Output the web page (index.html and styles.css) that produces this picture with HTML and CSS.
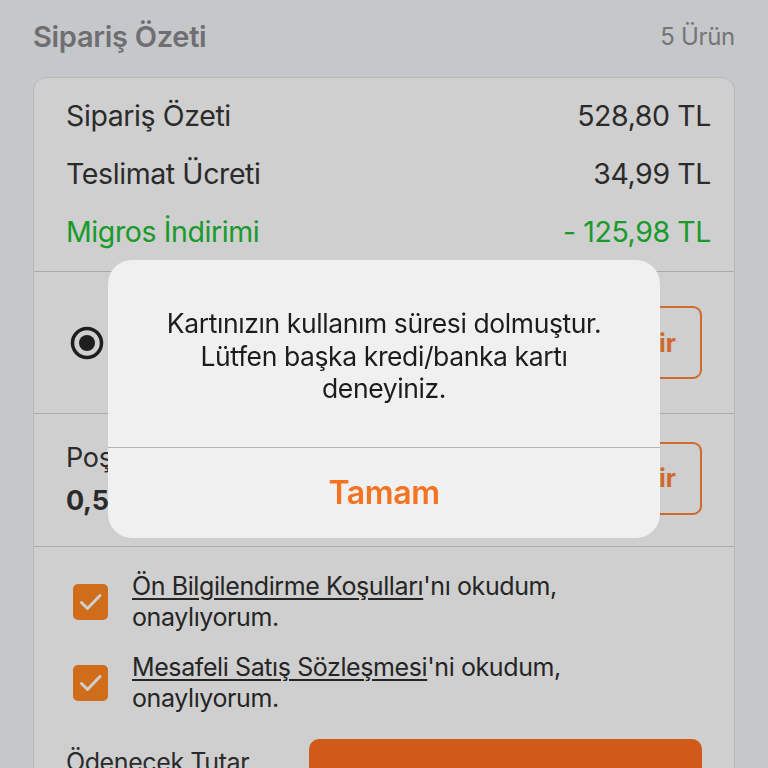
FILE: index.html
```html
<!DOCTYPE html>
<html lang="tr">
<head>
  <meta charset="UTF-8" />
  <meta name="viewport" content="width=device-width, initial-scale=1.0"/>
  <title>Sipariş Özeti</title>
  <link rel="stylesheet" href="styles.css">
</head>
<body>
  <div class="screen">
    <header class="page-head">
      <h1>Sipariş Özeti</h1>
      <span class="count">5 Ürün</span>
    </header>

    <section class="card">
      <div class="summary">
        <div class="line"><span>Sipariş Özeti</span><span>528,80 TL</span></div>
        <div class="line"><span>Teslimat Ücreti</span><span>34,99 TL</span></div>
        <div class="line discount"><span>Migros İndirimi</span><span>- 125,98 TL</span></div>
      </div>

      <div class="option">
        <svg class="radio" width="34" height="34" viewBox="0 0 34 34">
          <circle cx="17" cy="17" r="14.5" fill="none" stroke="#262626" stroke-width="3.5"/>
          <circle cx="17" cy="17" r="8" fill="#262626"/>
        </svg>
        <div class="option-text">
          <span class="title">Kart</span>
        </div>
        <button class="change">Değiştir</button>
      </div>

      <div class="option bag">
        <div class="option-text">
          <span class="title">Poşet Ücreti</span>
          <span class="value">0,50 TL</span>
        </div>
        <button class="change">Değiştir</button>
      </div>

      <div class="terms">
        <label class="check">
          <span class="box">
            <svg width="24" height="20" viewBox="0 0 24 20"><path d="M2.5 10.5 L8.5 16.5 L21 3.5" fill="none" stroke="#fff" stroke-width="3" stroke-linecap="round" stroke-linejoin="round"/></svg>
          </span>
          <span class="check-text"><u>Ön Bilgilendirme Koşulları</u>'nı okudum, onaylıyorum.</span>
        </label>
        <label class="check">
          <span class="box">
            <svg width="24" height="20" viewBox="0 0 24 20"><path d="M2.5 10.5 L8.5 16.5 L21 3.5" fill="none" stroke="#fff" stroke-width="3" stroke-linecap="round" stroke-linejoin="round"/></svg>
          </span>
          <span class="check-text"><u>Mesafeli Satış Sözleşmesi</u>'ni okudum, onaylıyorum.</span>
        </label>
      </div>

      <div class="total">
        <div class="total-text">
          <span>Ödenecek Tutar</span>
          <strong>437,81 TL</strong>
        </div>
        <button class="pay">Siparişi Tamamla</button>
      </div>
    </section>
  </div>

  <div class="dim"></div>

  <div class="alert">
    <p class="alert-msg">Kartınızın kullanım süresi dolmuştur. Lütfen başka kredi/banka kartı deneyiniz.</p>
    <button class="alert-btn">Tamam</button>
  </div>
</body>
</html>
```

FILE: styles.css
```css
body {
  margin: 0;
  font-family: Inter, "Noto Sans", sans-serif;
  background: #f4f6fb;
  color: #353535;
  overflow: hidden;
  height: 768px;
}
.screen {
  padding: 0 33px;
}
.page-head {
  display: flex;
  justify-content: space-between;
  align-items: center;
  height: 72px;
}
.page-head h1 {
  margin: 0;
  font-size: 29px;
  font-weight: 600;
  color: #89898d;
  letter-spacing: -0.3px;
}
.count {
  font-size: 24px;
  color: #919191;
  letter-spacing: -0.3px;
}
.card {
  margin-top: 5px;
  background: #fff;
  border: 1px solid #e2e2e2;
  border-radius: 13px;
}
.summary {
  display: flex;
  flex-direction: column;
  gap: 24px;
  padding: 21px 23px 22px 32px;
  border-bottom: 1px solid #d2d2d2;
}
.line {
  display: flex;
  justify-content: space-between;
  font-size: 28.5px;
  line-height: 34px;
  letter-spacing: -0.4px;
}
.discount {
  color: #20be34;
}
.option {
  display: flex;
  align-items: center;
  gap: 20px;
  height: 141px;
  padding: 0 32px 0 36px;
  border-bottom: 1px solid #d2d2d2;
}
.option-text {
  flex: 1;
  display: flex;
  flex-direction: column;
  gap: 12px;
  font-size: 27px;
  line-height: 31px;
  letter-spacing: -0.3px;
}
.option-text .value {
  font-weight: 700;
}
.option.bag {
  height: 132px;
  padding-left: 32px;
}
.option.bag .option-text {
  padding-bottom: 2px;
}
.change {
  flex: none;
  width: 142px;
  height: 73px;
  padding: 0 24px 0 0;
  border: 2px solid #ff8238;
  border-radius: 9px;
  background: transparent;
  color: #ff8238;
  font-family: inherit;
  font-size: 25px;
  font-weight: 700;
  text-align: right;
}
.option.bag .change {
  margin-top: -4px;
}
.terms {
  display: flex;
  flex-direction: column;
  gap: 19px;
  padding: 24px 56px 0 39px;
}
.check {
  display: flex;
  align-items: center;
  gap: 24px;
}
.box {
  flex: none;
  width: 35px;
  height: 36px;
  border-radius: 5px;
  background: #ff8722;
  display: flex;
  align-items: center;
  justify-content: center;
}
.check-text {
  font-size: 25px;
  line-height: 31px;
  letter-spacing: -0.4px;
  color: #2e2e2e;
}
.check-text u {
  text-underline-offset: 3px;
  text-decoration-thickness: 1.5px;
}
.total {
  display: flex;
  align-items: flex-start;
  padding: 25px 32px 0 32px;
}
.total-text {
  flex: none;
  width: 243px;
  display: flex;
  flex-direction: column;
  font-size: 25px;
  padding-top: 8px;
  letter-spacing: -0.4px;
}
.pay {
  flex: 1;
  height: 96px;
  border: none;
  border-radius: 10px;
  background: #ff6f20;
  color: #fff;
  font-family: inherit;
  font-size: 26px;
  font-weight: 700;
}
.dim {
  position: fixed;
  inset: 0;
  background: rgba(0, 0, 0, 0.19);
}
.alert {
  position: fixed;
  left: 108px;
  top: 260px;
  width: 552px;
  background: #f1f0f0;
  border-radius: 24px;
  overflow: hidden;
  text-align: center;
}
.alert-msg {
  margin: 0;
  padding: 47px 46px 42px;
  font-size: 26.5px;
  line-height: 32.5px;
  color: #1c1c1c;
  letter-spacing: -0.4px;
  border-bottom: 1px solid #b3b3b3;
}
.alert-btn {
  display: block;
  width: 100%;
  height: 90px;
  border: none;
  background: transparent;
  color: #f37321;
  font-family: inherit;
  font-size: 32px;
  font-weight: 600;
  letter-spacing: -0.4px;
}
```
